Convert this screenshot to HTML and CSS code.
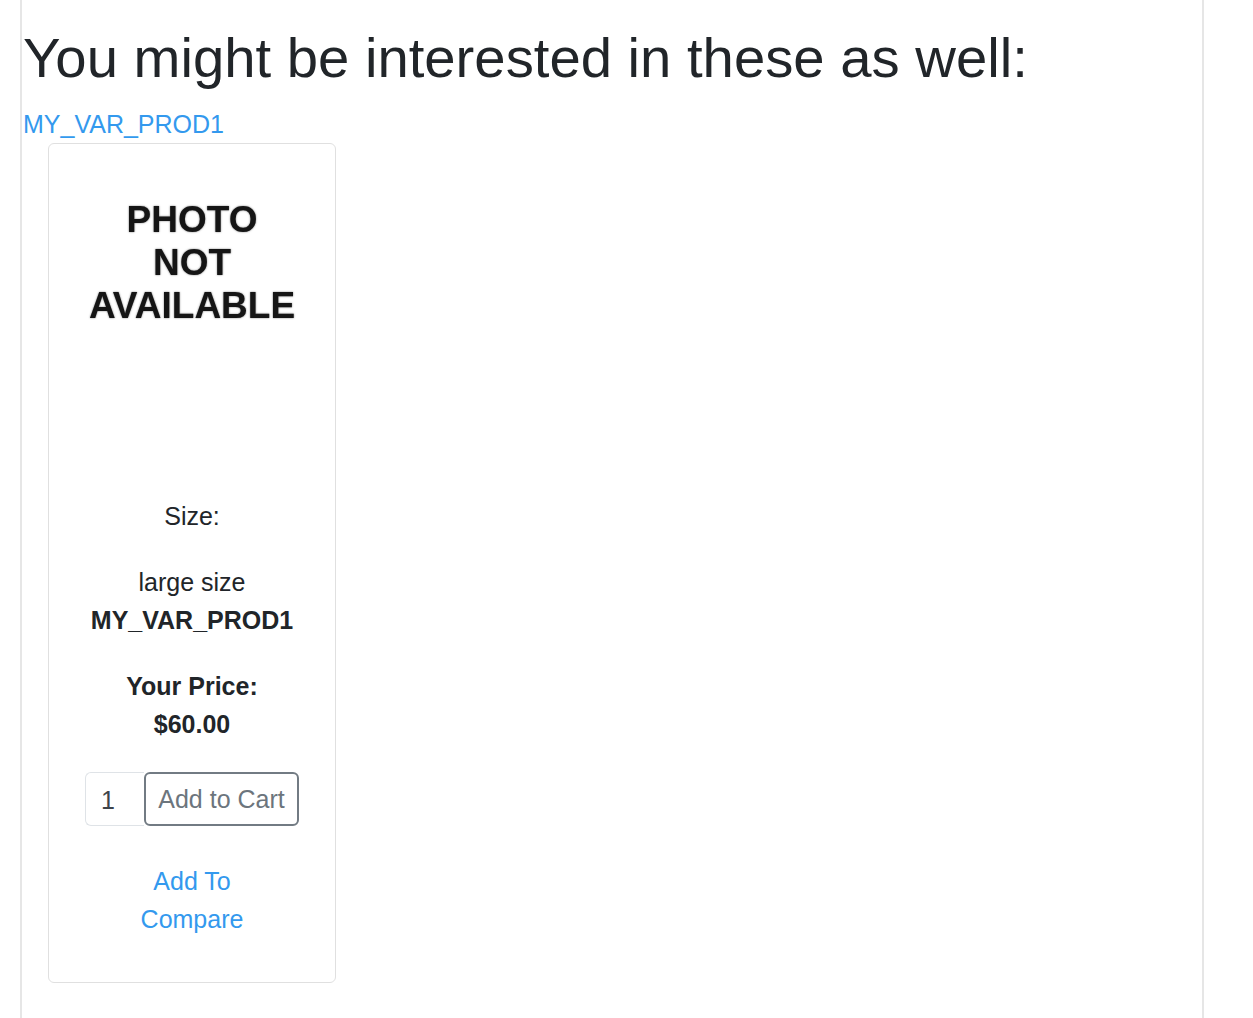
FILE: index.html
```html
<!DOCTYPE html>
<html lang="en">
<head>
<meta charset="utf-8">
<title>Related products</title>
<link rel="stylesheet" href="styles.css">
</head>
<body>
<div class="page">
  <h1 class="title">You might be interested in these as well:</h1>
  <a class="group-link" href="#">MY_VAR_PROD1</a>
  <div class="card">
    <div class="photo">
      <div class="photo-text">PHOTO<br>NOT<br>AVAILABLE</div>
    </div>
    <p class="attr-label">Size:</p>
    <p class="attr-value">large size</p>
    <p class="prod-name">MY_VAR_PROD1</p>
    <p class="price-label">Your Price:</p>
    <p class="price">$60.00</p>
    <div class="cart-group">
      <input class="qty" type="text" value="1">
      <button class="add-btn" type="button">Add to Cart</button>
    </div>
    <a class="compare" href="#">Add To<br>Compare</a>
  </div>
</div>
</body>
</html>
```

FILE: styles.css
```css
html, body {
  margin: 0;
  padding: 0;
  background: #ffffff;
}

body {
  font-family: "Liberation Sans", Arial, sans-serif;
  font-size: 25px;
  line-height: 1.5;
  color: #212529;
}

.page {
  margin-left: 20px;
  width: 1184px;
  min-height: 1018px;
  border-left: 2px solid #e6e6e6;
  border-right: 2px solid #e6e6e6;
  padding: 24px 0 0 1px;
  box-sizing: border-box;
}

.title {
  font-size: 56.25px;
  font-weight: 400;
  line-height: 1.2;
  margin: 0 0 14px 0;
  color: #212529;
}

.group-link {
  display: block;
  color: #3399ee;
  text-decoration: none;
  line-height: 37.5px;
  height: 37px;
}

.card {
  margin-left: 25px;
  width: 286px;
  border: 1px solid #e0e0e0;
  border-radius: 6px;
  text-align: center;
  padding-bottom: 44px;
}

.photo {
  height: 354px;
  padding-top: 54px;
  box-sizing: border-box;
}

.photo-text {
  font-size: 37px;
  font-weight: 700;
  line-height: 43px;
  color: #151515;
  text-shadow: 0 0 2px rgba(0, 0, 0, 0.55);
  filter: blur(0.5px);
}

.card p {
  margin: 0;
}

.attr-label {
  margin-bottom: 29px !important;
}

.prod-name {
  font-weight: 700;
}

.price-label {
  font-weight: 700;
  margin-top: 29px !important;
}

.price {
  font-weight: 700;
}

.cart-group {
  display: flex;
  justify-content: center;
  margin-top: 29px;
  height: 54px;
}

.qty {
  width: 59px;
  height: 54px;
  box-sizing: border-box;
  border: 1px solid #dfe3e7;
  border-right: none;
  border-radius: 6px 0 0 6px;
  font-family: "Liberation Sans", Arial, sans-serif;
  font-size: 25px;
  color: #3e444a;
  padding: 2px 0 0 15px;
  margin: 0;
  outline: none;
}

.add-btn {
  width: 155px;
  height: 54px;
  box-sizing: border-box;
  border: 2px solid #727b83;
  border-radius: 6px;
  background: #ffffff;
  font-family: "Liberation Sans", Arial, sans-serif;
  font-size: 25px;
  color: #6c757d;
  padding: 0 10px;
  margin: 0;
}

.compare {
  display: block;
  margin-top: 37px;
  color: #3399ee;
  text-decoration: none;
}
```
